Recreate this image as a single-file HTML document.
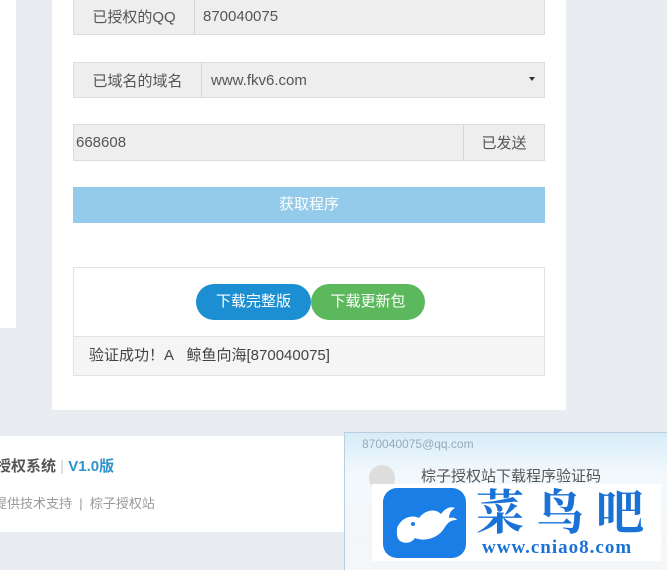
<!DOCTYPE html>
<html><head><meta charset="utf-8"><style>
*{margin:0;padding:0;box-sizing:border-box}
html,body{width:667px;height:570px;overflow:hidden}
body{background:#e9edf1;position:relative;font-family:"Liberation Sans","Noto Sans CJK SC",sans-serif;color:#555;font-size:15px}
.a{position:absolute;white-space:nowrap}
.grp{position:absolute;left:73px;width:472px;border:1px solid #ddd;background:#eee;display:flex;align-items:center}
.lab{height:100%;display:flex;align-items:center;justify-content:center;border-right:1px solid #d5d5d5}
</style></head><body>
<div class="a" style="left:0;top:0;width:16px;height:328px;background:#fff"></div>
<div class="a" style="left:52px;top:0;width:514px;height:410px;background:#fff"></div>
<div class="grp" style="top:-2px;height:37px"><div class="lab" style="width:121px">已授权的QQ</div><span style="padding-left:8px">870040075</span></div>
<div class="grp" style="top:62px;height:36px"><div class="lab" style="width:128px">已域名的域名</div><span style="padding-left:9px">www.fkv6.com</span><span style="position:absolute;right:9px;top:14px;border-left:3px solid transparent;border-right:3px solid transparent;border-top:4px solid #333"></span></div>
<div class="grp" style="top:124px;height:37px"><span style="padding-left:2px;flex:1">668608</span><div class="lab" style="width:81px;border-right:none;border-left:1px solid #d5d5d5">已发送</div></div>
<div class="a" style="left:73px;top:187px;width:472px;height:36px;background:#94cbea;color:#fff;text-align:center;line-height:36px">获取程序</div>
<div class="a" style="left:73px;top:267px;width:472px;height:109px;border:1px solid #e3e3e3;background:#fff">
<div class="a" style="left:122px;top:16px;width:115px;height:36px;border-radius:18px;background:#1b8fd2;color:#fff;text-align:center;line-height:36px">下载完整版</div>
<div class="a" style="left:237px;top:16px;width:114px;height:36px;border-radius:18px;background:#5cb85c;color:#fff;text-align:center;line-height:36px">下载更新包</div>
<div class="a" style="left:0;top:68px;width:470px;height:39px;background:#f5f5f5;border-top:1px solid #e3e3e3;padding-left:15px;line-height:38px;color:#444">验证成功！A&nbsp;&nbsp;&nbsp;鲸鱼向海[870040075]</div>
</div>
<div class="a" style="left:0;top:436px;width:360px;height:96px;background:#fff"></div>
<div class="a" style="left:-4px;top:455px;font-size:15px;font-weight:bold;color:#555">授权系统 <span style="color:#ccc;font-weight:normal">|</span> <span style="color:#2e93cc">V1.0版</span></div>
<div class="a" style="left:-6px;top:493px;font-size:13px;color:#999">提供技术支持 &nbsp;| &nbsp;棕子授权站</div>
<div class="a" style="left:344px;top:432px;width:330px;height:140px;border:1px solid #b8cfdf;background:linear-gradient(#d6ecf8 0,#f2f8fc 40px,#f4f6f8 100%)">
<div class="a" style="left:17px;top:4px;font-size:12px;color:#9ab">870040075@qq.com</div>
<div class="a" style="left:24px;top:32px;width:26px;height:26px;border-radius:13px;background:#ddd"></div>
<div class="a" style="left:76px;top:32px;font-size:15px;color:#555">棕子授权站下载程序验证码</div>
</div>
<div class="a" style="left:372px;top:484px;width:289px;height:77px;background:#fff"></div>
<div class="a" style="left:383px;top:488px;width:83px;height:70px;border-radius:14px;background:#1a7ee6">
<svg width="83" height="70" viewBox="0 0 83 70"><path d="M14 40c4-10 14-14 22-10 6-8 16-10 22-4 4-6 10-8 14-6-4 2-6 6-6 10 4-1 7 0 8 2-8 0-10 4-14 10-6 8-18 12-28 8-4 6-12 6-16 2-3-4-2-9-2-12z" fill="#fff"/><circle cx="30" cy="36" r="2" fill="#1a7ee6"/></svg></div>
<div class="a" style="left:476px;top:484px;font-family:'Noto Serif CJK SC',serif;font-size:48px;font-weight:bold;color:#1a72d6;letter-spacing:12px;line-height:50px">菜鸟吧</div>
<div class="a" style="left:482px;top:537px;font-family:'Liberation Serif',serif;font-size:19px;font-weight:bold;color:#1a72d6;letter-spacing:1px">www.cniao8.com</div>
</body></html>
